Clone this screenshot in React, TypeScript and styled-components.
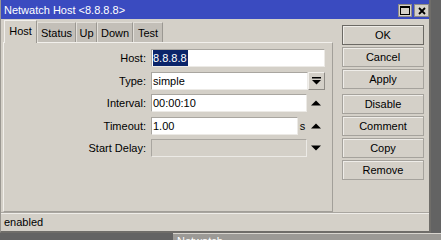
import * as React from "react";
import styled, { createGlobalStyle } from "styled-components";

const Global = createGlobalStyle`
  html, body { margin: 0; padding: 0; background: #5e5e5e; }
  body { font-family: "Liberation Sans", Arial, sans-serif; font-size: 11px; color: #000; }
`;

const Desktop = styled.div`
  position: relative;
  width: 441px;
  height: 240px;
  overflow: hidden;
  background: #636363;
`;

/* window lying behind the dialog, only its top edge shows */
const BackWindow = styled.div`
  position: absolute;
  left: 173px;
  top: 233px;
  width: 268px;
  height: 7px;
  overflow: hidden;
  background: #9c9a96;
  border-top: 1px solid #d8d5cf;
  color: #fff;
  padding: 1px 0 0 4px;
  box-sizing: border-box;
  line-height: 12px;
`;

const Window = styled.div`
  position: absolute;
  left: 0;
  top: 0;
  width: 431px;
  height: 233px;
  box-sizing: border-box;
  display: flex;
  flex-direction: column;
  background: #d4d0c8;
  border-left: 1px solid #9a9791;
  border-right: 2px solid #6f6d69;
  border-bottom: 2px solid #6f6d69;
`;

const TitleBar = styled.div`
  height: 19px;
  flex: none;
  display: flex;
  align-items: center;
  background: #3a4bc0;
  color: #fff;
  padding-left: 3px;
`;

const Title = styled.div`
  flex: 1;
`;

const TitleButtons = styled.div`
  display: flex;
  gap: 2px;
  margin-top: 2px;
`;

const TitleButton = styled.div<{ $w: number }>`
  width: ${(p) => p.$w}px;
  height: 13px;
  box-sizing: border-box;
  background: #d4d0c8;
  border: 1px solid #8f8c86;
  display: flex;
  align-items: center;
  justify-content: center;
`;

const Body = styled.div`
  flex: 1;
  display: flex;
  min-height: 0;
`;

const Main = styled.div`
  width: 332px;
  flex: none;
  display: flex;
  flex-direction: column;
  padding-left: 2px;
  box-sizing: border-box;
`;

const TabRow = styled.div`
  height: 23px;
  display: flex;
  align-items: flex-end;
  padding-left: 1px;
`;

const Tab = styled.div<{ $active?: boolean; $w: number }>`
  width: ${(p) => p.$w}px;
  height: ${(p) => (p.$active ? 23 : 20)}px;
  box-sizing: border-box;
  padding-top: ${(p) => (p.$active ? 4 : 4)}px;
  text-align: center;
  white-space: nowrap;
  background: ${(p) => (p.$active ? "#d4d0c8" : "#c3bfb8")};
  border-top: 1px solid ${(p) => (p.$active ? "#f2f0ec" : "#e2dfd9")};
  border-left: 1px solid ${(p) => (p.$active ? "#f2f0ec" : "#e2dfd9")};
  border-right: 1px solid #9b9892;
  margin-bottom: ${(p) => (p.$active ? "-1px" : "0")};
  position: relative;
  z-index: ${(p) => (p.$active ? 1 : 0)};
`;

const Panel = styled.div`
  flex: 1;
  box-sizing: border-box;
  border-top: 1px solid #f2f0ec;
  border-left: 1px solid #f2f0ec;
  border-right: 1px solid #a29f99;
  border-bottom: 1px solid #a29f99;
  padding-top: 6px;
  display: flex;
  flex-direction: column;
  gap: 4.5px;
`;

const Row = styled.div`
  display: flex;
  align-items: center;
  height: 18px;
`;

const Label = styled.div`
  width: 142px;
  text-align: right;
  padding-right: 5px;
`;

const Field = styled.div`
  width: 174px;
  height: 18px;
  display: flex;
  align-items: center;
`;

const Input = styled.div<{ $disabled?: boolean }>`
  flex: 1;
  height: 18px;
  box-sizing: border-box;
  background: ${(p) => (p.$disabled ? "#d4d0c8" : "#fff")};
  border-top: 1px solid #a9a6a0;
  border-left: 1px solid #a9a6a0;
  border-right: 1px solid #eceae6;
  border-bottom: 1px solid #eceae6;
  padding-left: 1px;
  display: flex;
  align-items: center;
  white-space: nowrap;
  overflow: hidden;
`;

const Selected = styled.span`
  background: #0a246a;
  color: #fff;
  line-height: 16px;
  padding: 0 1px 0 0;
`;

const DropButton = styled.div`
  width: 17px;
  height: 18px;
  box-sizing: border-box;
  border-top: 1px solid #f2f0ec;
  border-left: 1px solid #f2f0ec;
  border-right: 1px solid #8f8c86;
  border-bottom: 1px solid #8f8c86;
  display: flex;
  align-items: center;
  justify-content: center;
`;

const Arrow = styled.div`
  width: 18px;
  height: 18px;
  display: flex;
  align-items: center;
  justify-content: center;
`;

const Unit = styled.div`
  width: 9px;
  text-align: center;
`;

const Side = styled.div`
  flex: 1;
  display: flex;
  flex-direction: column;
  padding: 6px 0 0 9px;
`;

const Button = styled.div<{ $default?: boolean; $group?: boolean }>`
  width: 82px;
  height: 20px;
  box-sizing: border-box;
  margin-top: ${(p) => (p.$group ? "5px" : "2px")};
  border: 1px solid ${(p) => (p.$default ? "#6b6964" : "#a5a29c")};
  box-shadow: inset 1px 1px 0 #efede9;
  display: flex;
  align-items: center;
  justify-content: center;
  &:first-child {
    margin-top: 0;
  }
`;

const StatusBar = styled.div`
  height: 19px;
  flex: none;
  box-sizing: border-box;
  border-top: 1px solid #a9a6a0;
  box-shadow: inset 0 1px 0 #efede9;
  display: flex;
  align-items: center;
  padding-left: 3px;
`;

const UpIcon = () => (
  <svg width="10" height="6" viewBox="0 0 10 6">
    <polygon points="0,5.5 10,5.5 5,0.5" fill="#000" />
  </svg>
);

const DownIcon = () => (
  <svg width="10" height="6" viewBox="0 0 10 6">
    <polygon points="0,0.5 10,0.5 5,5.5" fill="#000" />
  </svg>
);

const ListIcon = () => (
  <svg width="9" height="8" viewBox="0 0 9 8">
    <rect x="0" y="0" width="9" height="1.5" fill="#000" />
    <polygon points="0,3 9,3 4.5,7.5" fill="#000" />
  </svg>
);

const tabs: [string, number][] = [
  ["Host", 33],
  ["Status", 39],
  ["Up", 21],
  ["Down", 36],
  ["Test", 30],
];

export default function App() {
  return (
    <Desktop>
      <Global />
      <BackWindow>Netwatch</BackWindow>
      <Window>
        <TitleBar>
          <Title>Netwatch Host &lt;8.8.8.8&gt;</Title>
          <TitleButtons>
            <TitleButton $w={14}>
              <svg width="10" height="9" viewBox="0 0 10 9">
                <rect x="0.5" y="0.5" width="9" height="8" fill="none" stroke="#000" />
                <rect x="0" y="0" width="10" height="2" fill="#000" />
              </svg>
            </TitleButton>
            <TitleButton $w={15}>
              <svg width="8" height="8" viewBox="0 0 8 8">
                <path d="M1 1 L7 7 M7 1 L1 7" stroke="#000" strokeWidth="1.8" />
              </svg>
            </TitleButton>
          </TitleButtons>
        </TitleBar>
        <Body>
          <Main>
            <TabRow>
              {tabs.map(([t, w], i) => (
                <Tab key={t} $w={w} $active={i === 0}>
                  {t}
                </Tab>
              ))}
            </TabRow>
            <Panel>
              <Row>
                <Label>Host:</Label>
                <Field>
                  <Input>
                    <Selected>8.8.8.8</Selected>
                  </Input>
                </Field>
              </Row>
              <Row>
                <Label>Type:</Label>
                <Field>
                  <Input>simple</Input>
                  <DropButton>
                    <ListIcon />
                  </DropButton>
                </Field>
              </Row>
              <Row>
                <Label>Interval:</Label>
                <Field>
                  <Input>00:00:10</Input>
                  <Arrow>
                    <UpIcon />
                  </Arrow>
                </Field>
              </Row>
              <Row>
                <Label>Timeout:</Label>
                <Field>
                  <Input>1.00</Input>
                  <Unit>s</Unit>
                  <Arrow>
                    <UpIcon />
                  </Arrow>
                </Field>
              </Row>
              <Row>
                <Label>Start Delay:</Label>
                <Field>
                  <Input $disabled />
                  <Arrow>
                    <DownIcon />
                  </Arrow>
                </Field>
              </Row>
            </Panel>
          </Main>
          <Side>
            <Button $default>OK</Button>
            <Button>Cancel</Button>
            <Button>Apply</Button>
            <Button $group>Disable</Button>
            <Button>Comment</Button>
            <Button>Copy</Button>
            <Button>Remove</Button>
          </Side>
        </Body>
        <StatusBar>enabled</StatusBar>
      </Window>
    </Desktop>
  );
}
